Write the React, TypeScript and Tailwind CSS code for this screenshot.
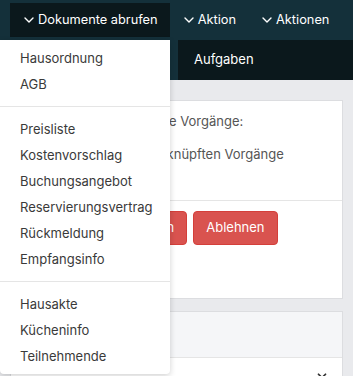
import { ChevronDown } from 'lucide-react';

const font = { fontFamily: 'Inter, "Noto Sans", sans-serif' };

function Caret() {
  return (
    <svg width="10" height="6" viewBox="0 0 10 6" fill="none" stroke="currentColor" strokeWidth="1.4" strokeLinecap="round" strokeLinejoin="round">
      <path d="M1 1l4 4 4-4" />
    </svg>
  );
}

function NavItem({ label, active }: { label: string; active?: boolean }) {
  return (
    <button
      type="button"
      className={`flex h-[34px] shrink-0 items-center gap-[4px] whitespace-nowrap pl-[14px] pr-[12px] text-[12.8px] text-white ${active ? 'bg-[#0b181c]' : ''}`}
    >
      <Caret />
      <span>{label}</span>
    </button>
  );
}

function MenuItem({ children }: { children: string }) {
  return (
    <a className="block h-[26px] whitespace-nowrap px-[20px] text-[13px] leading-[26px] text-[#3a3a3a]" href="#">
      {children}
    </a>
  );
}

function Divider() {
  return <div className="my-[9px] h-px bg-[#e5e5e5]" />;
}

function DocumentsMenu() {
  return (
    <div className="absolute left-0 top-[40px] z-10 w-[170px] rounded-b-[4px] bg-white py-[5px] shadow-[0_2px_6px_rgba(0,0,0,0.18)]">
      <MenuItem>Hausordnung</MenuItem>
      <MenuItem>AGB</MenuItem>
      <Divider />
      <MenuItem>Preisliste</MenuItem>
      <MenuItem>Kostenvorschlag</MenuItem>
      <MenuItem>Buchungsangebot</MenuItem>
      <MenuItem>Reservierungsvertrag</MenuItem>
      <MenuItem>Rückmeldung</MenuItem>
      <MenuItem>Empfangsinfo</MenuItem>
      <Divider />
      <MenuItem>Hausakte</MenuItem>
      <MenuItem>Kücheninfo</MenuItem>
      <MenuItem>Teilnehmende</MenuItem>
    </div>
  );
}

export default function App() {
  return (
    <div className="relative h-[376px] w-[353px] overflow-hidden bg-[#e9eaed]" style={font}>
      <nav className="flex h-[40px] items-center bg-[#14303a] pl-[10px]">
        <NavItem label="Dokumente abrufen" active />
        <NavItem label="Aktion" />
        <NavItem label="Aktionen" />
      </nav>

      <div className="flex h-[40px] bg-[#14303a]">
        <div className="w-[178px]" />
        <div className="flex flex-1 items-center bg-[#0b181c] px-[16px] text-[13px] text-white">
          Aufgaben
        </div>
      </div>

      <main className="flex flex-col gap-[12px] px-[10px] pt-[20px]">
        <section className="border border-[#dcdde0] bg-white">
          <div className="h-[99px] pl-[98px] pt-[10px] text-[13px] leading-[20px] text-[#555]">
            <p>Verknüpfte Vorgänge:</p>
            <p className="mt-[13px]">Keine verknüpften Vorgänge</p>
          </div>
          <div className="flex h-[98px] gap-[6px] border-t border-[#e5e5e5] pl-[84px] pt-[10px]">
            <button type="button" className="h-[34px] rounded-[4px] border border-[#d43f3a] bg-[#d9534f] px-[12px] text-[13px] text-white">
              Annehmen
            </button>
            <button type="button" className="h-[34px] rounded-[4px] border border-[#d43f3a] bg-[#d9534f] px-[12px] text-[13px] text-white">
              Ablehnen
            </button>
          </div>
        </section>

        <section className="border border-[#dcdde0] bg-white">
          <div className="h-[46px] border-b border-[#e5e5e5] bg-[#f5f6f8]" />
          <div className="flex h-[40px] justify-end pr-[13px] pt-[11px] text-[#333]">
            <ChevronDown size={14} strokeWidth={3} />
          </div>
        </section>
      </main>

      <DocumentsMenu />
    </div>
  );
}
